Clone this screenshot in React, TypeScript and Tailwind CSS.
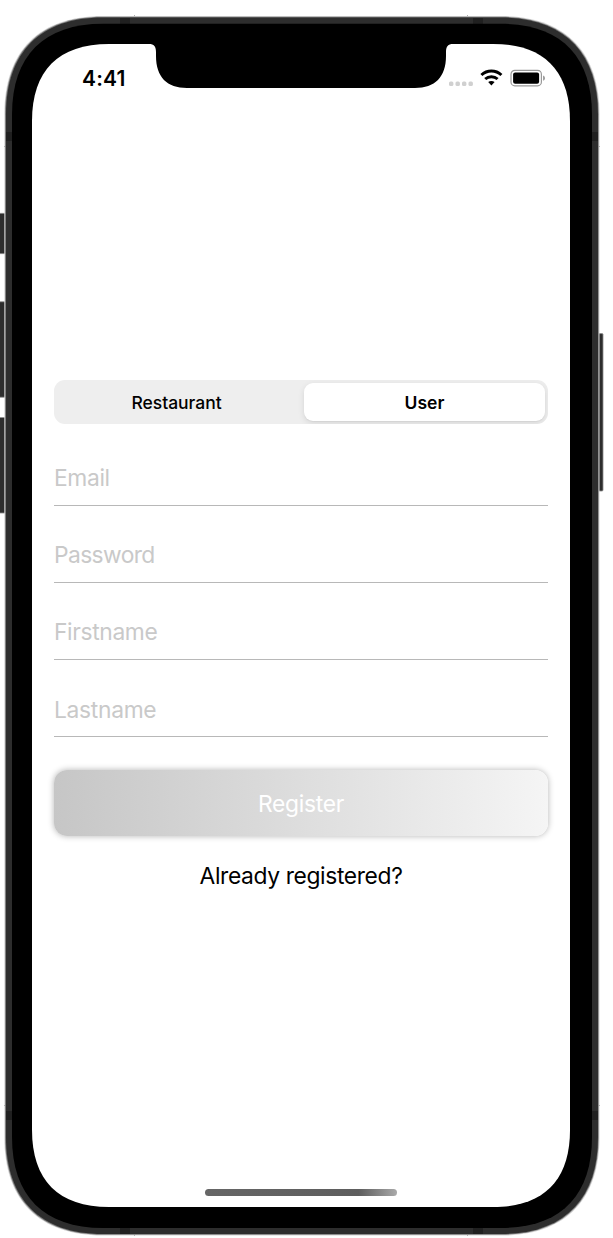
import { useState } from "react";

// Rounded rectangle with continuous corners: `a` is where the curve leaves the
// straight edge, `c` the distance of its control points from the corner.
function squircle(x0: number, y0: number, x1: number, y1: number, a: number, c: number) {
  return [
    `M${x0 + a} ${y0}L${x1 - a} ${y0}`,
    `C${x1 - c} ${y0} ${x1} ${y0 + c} ${x1} ${y0 + a}`,
    `L${x1} ${y1 - a}`,
    `C${x1} ${y1 - c} ${x1 - c} ${y1} ${x1 - a} ${y1}`,
    `L${x0 + a} ${y1}`,
    `C${x0 + c} ${y1} ${x0} ${y1 - c} ${x0} ${y1 - a}`,
    `L${x0} ${y0 + a}`,
    `C${x0} ${y0 + c} ${x0 + c} ${y0} ${x0 + a} ${y0}Z`,
  ].join("");
}

function PhoneBody() {
  return (
    <svg
      className="pointer-events-none absolute inset-0"
      width="613"
      height="1238"
      viewBox="0 0 613 1238"
      aria-hidden="true"
    >
      <g fill="#2d2d2d" stroke="#8a8a8a" strokeWidth="0.8">
        <rect x="-3" y="213.3" width="10" height="40.4" />
        <rect x="-3" y="301.8" width="10" height="95.4" />
        <rect x="-3" y="417.6" width="10" height="95.4" />
        <rect x="597" y="333.6" width="6" height="157.4" rx="1" />
      </g>
      <path d={squircle(4.3, 16, 599.5, 1235.6, 98, 35)} fill="#d4d4d4" />
      <path d={squircle(5.1, 16.8, 598.7, 1234.7, 97.5, 34.7)} fill="#777777" />
      <path d={squircle(6, 17.6, 598, 1234, 97, 34.5)} fill="#2d2d2d" />
      <g fill="#202020">
        <rect x="120" y="18" width="10" height="6" />
        <rect x="473" y="18" width="10" height="6" />
        <rect x="120" y="1228" width="10" height="6" />
        <rect x="473" y="1228" width="10" height="6" />
        <rect x="6" y="132" width="6" height="9" />
        <rect x="592" y="132" width="6" height="9" />
        <rect x="6" y="1111" width="6" height="9" />
        <rect x="592" y="1111" width="6" height="9" />
      </g>
      <g fill="#b0b0b0">
        <rect x="134" y="15" width="1" height="1" />
        <rect x="467" y="15" width="1" height="1" />
        <rect x="134" y="1235" width="1" height="1" />
        <rect x="467" y="1235" width="1" height="1" />
        <rect x="4" y="146" width="1" height="1" />
        <rect x="599" y="146" width="1" height="1" />
        <rect x="4" y="1105" width="1" height="1" />
        <rect x="599" y="1105" width="1" height="1" />
      </g>
      <path d={squircle(12, 23.8, 592, 1228, 91, 31.8)} fill="#000" />
      <path d={squircle(32, 44, 570, 1207, 77, 26.5)} fill="#fff" />
      <path
        d="M149 43V44C154 44 156 46.500 156 52V56C156 77 167 88 187 88H415C435 88 446 77 446 56V52C446 46.500 448 44 453 44V43Z"
        fill="#000"
      />
    </svg>
  );
}

function StatusIcons() {
  return (
    <svg width="98" height="20" viewBox="0 0 98 20" aria-hidden="true">
      <g fill="#d0d0d0">
        <rect x="1" y="13.500" width="4.400" height="4.400" rx="1.500" />
        <rect x="7.500" y="13.500" width="4.400" height="4.400" rx="1.500" />
        <rect x="14" y="13.500" width="4.400" height="4.400" rx="1.500" />
        <rect x="20.500" y="13.500" width="4.400" height="4.400" rx="1.500" />
      </g>
      <g fill="none" stroke="#000" strokeWidth="3">
        <path d="M33.400 7C39.100 1.700 47.700 1.700 53.400 7" />
        <path d="M37.200 11C40.700 7.900 46.100 7.900 49.600 11" />
      </g>
      <path d="M40.200 14.100C42 12.500 44.800 12.500 46.600 14.100L43.400 17.500Z" fill="#000" />
      <rect x="63" y="2.400" width="30.400" height="15.400" rx="3.800" fill="none" stroke="#999" strokeWidth="1.200" />
      <rect x="65.100" y="4.500" width="26" height="11.200" rx="2" fill="#000" />
      <path d="M95.200 7.500C97.400 8.500 97.400 11.900 95.200 12.800Z" fill="#8a8a8a" />
    </svg>
  );
}

const segments = [
  { label: "Restaurant", tracking: "tracking-[-0.03px]" },
  { label: "User", tracking: "tracking-[0px]" },
];

const fields = [
  { label: "Email", type: "email", tracking: "tracking-[-0.35px]" },
  { label: "Password", type: "password", tracking: "tracking-[-0.6px]" },
  { label: "Firstname", type: "text", tracking: "tracking-[-0.35px]" },
  { label: "Lastname", type: "text", tracking: "tracking-[-0.3px]" },
];

export default function App() {
  const [active, setActive] = useState("User");

  return (
    <div className="relative h-[1238px] w-[613px] overflow-hidden bg-white font-['Inter',sans-serif] text-black">
      <PhoneBody />
      <main className="relative flex h-[1207px] w-[570px] flex-col pt-[44px] pl-[32px]">
        <header className="flex h-[66px] items-start justify-between pr-[24px] pl-[50px]">
          <time className="mt-[21px] text-[21px] leading-[27px] font-semibold tracking-[0.15px]">4:41</time>
          <div className="mt-[24px]">
            <StatusIcons />
          </div>
        </header>

        <form className="mt-[270px] flex flex-col px-[22px]" onSubmit={(e) => e.preventDefault()}>
          <div className="grid h-[44px] grid-cols-2 overflow-hidden rounded-[11px] bg-[#eeeeee]">
            {segments.map((s) => (
              <button
                key={s.label}
                type="button"
                onClick={() => setActive(s.label)}
                className={
                  active === s.label
                    ? "m-[3px] rounded-[9px] bg-white pt-[2px] text-[17.5px] font-semibold shadow-[0_2px_6px_rgba(0,0,0,0.1),0_1px_1px_rgba(0,0,0,0.04)]"
                    : "pt-[2px] pr-[2px] text-[17.5px] font-medium"
                }
              >
                <span className={s.tracking}>{s.label}</span>
              </button>
            ))}
          </div>

          <div className="mt-[4.400px] flex flex-col">
            {fields.map((f) => (
              <input
                key={f.label}
                type={f.type}
                placeholder={f.label}
                className={`h-[77.200px] w-full border-b border-[#b8b8b8] bg-transparent pt-[22.200px] text-[22.8px] outline-none placeholder:text-[#c9c9c9] ${f.tracking}`}
              />
            ))}
          </div>

          <button
            type="submit"
            className="mt-[32.800px] h-[66px] rounded-[13px] bg-linear-to-r from-[#c6c6c6] to-[#f5f5f5] pt-[2px] text-[22.8px] tracking-[-0.3px] text-white shadow-[0_0_6px_rgba(0,0,0,0.3)]"
          >
            Register
          </button>
          <a href="#" className="mt-[25px] self-center text-[22.8px] leading-[30px] tracking-[-0.36px]">
            Already registered?
          </a>
        </form>

        <div className="mt-auto mb-[11px] h-[7px] w-[192px] self-center rounded-full bg-linear-to-r from-[#666666] via-[#5e5e5e] via-80% to-[#aaaaaa]" />
      </main>
    </div>
  );
}
